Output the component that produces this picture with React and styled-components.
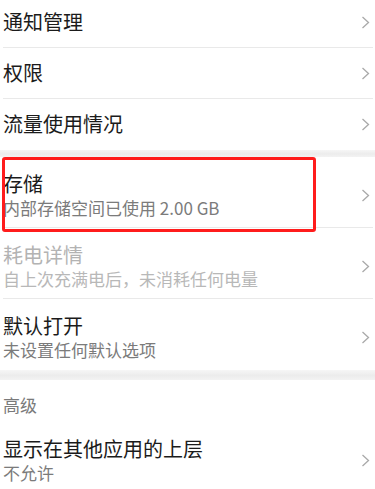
import React from "react";
import styled, { createGlobalStyle } from "styled-components";

const GlobalStyle = createGlobalStyle`
  html, body {
    margin: 0;
    padding: 0;
    background: #ffffff;
  }
  body {
    font-family: "Noto Sans CJK SC", "Noto Sans", sans-serif;
    overflow: hidden;
  }
`;

const items = [
  { title: "通知管理" },
  { title: "权限" },
  { title: "流量使用情况", last: true },
];

const details = [
  { title: "存储", sub: "内部存储空间已使用 2.00 GB", marked: true },
  { title: "耗电详情", sub: "自上次充满电后，未消耗任何电量", disabled: true },
  { title: "默认打开", sub: "未设置任何默认选项", last: true },
];

function Chevron() {
  return (
    <svg width="9" height="13" viewBox="0 0 9 13">
      <polyline
        points="1.5,1 7.5,6.5 1.5,12"
        fill="none"
        stroke="#a9a9a9"
        strokeWidth="1.3"
      />
    </svg>
  );
}

export default function App() {
  return (
    <>
      <GlobalStyle />
      <Page>
        <Section top>
          {items.map((item) => (
            <Row key={item.title} last={item.last}>
              <Texts>
                <Title>{item.title}</Title>
              </Texts>
              <Arrow>
                <Chevron />
              </Arrow>
            </Row>
          ))}
        </Section>
        <Band />
        <Section>
          {details.map((item) => (
            <TallRow key={item.title} last={item.last}>
              <Texts>
                <Title disabled={item.disabled}>{item.title}</Title>
                <Sub disabled={item.disabled}>{item.sub}</Sub>
              </Texts>
              <Arrow>
                <Chevron />
              </Arrow>
              {item.marked && <Mark />}
            </TallRow>
          ))}
        </Section>
        <Band tall />
        <Header>高级</Header>
        <Section>
          <TallRow last tight>
            <Texts>
              <Title>显示在其他应用的上层</Title>
              <Sub>不允许</Sub>
            </Texts>
            <Arrow>
              <Chevron />
            </Arrow>
          </TallRow>
        </Section>
      </Page>
    </>
  );
}

const Page = styled.div`
  width: 375px;
  height: 489px;
  overflow: hidden;
  background: #ffffff;
`;

const Section = styled.div`
  display: flex;
  flex-direction: column;
  margin-top: ${(props) => (props.top ? "-3px" : "0")};
`;

const Row = styled.div`
  position: relative;
  display: flex;
  align-items: center;
  height: 50px;
  margin: 0 2px 0 3px;
  border-bottom: 1px solid ${(props) => (props.last ? "transparent" : "#e9e9e9")};
`;

const TallRow = styled(Row)`
  height: auto;
  padding: ${(props) => (props.tight ? "12px 0 10px" : "14px 0 8px")};
`;

const Texts = styled.div`
  flex: 1;
  display: flex;
  flex-direction: column;
`;

const Title = styled.div`
  font-size: 20px;
  line-height: 26px;
  color: ${(props) => (props.disabled ? "#b3b3b3" : "#1b1b1b")};
`;

const Sub = styled.div`
  font-size: 17px;
  line-height: 22px;
  color: ${(props) => (props.disabled ? "#b8b8b8" : "#7b7b7b")};
`;

const Arrow = styled.div`
  display: flex;
  align-items: center;
  padding-right: 3px;
`;

const Band = styled.div`
  height: ${(props) => (props.tall ? "10px" : "7px")};
  background: linear-gradient(#f6f6f6, #ececec 55%, #f3f3f3);
`;

const Header = styled.div`
  padding: 14px 3px 8px;
  font-size: 17px;
  line-height: 22px;
  color: #7a7a7a;
`;

const Mark = styled.div`
  position: absolute;
  top: 0;
  left: -1px;
  width: 314px;
  height: 75px;
  box-sizing: border-box;
  border: 3px solid #ff1c1c;
  border-radius: 3px;
  pointer-events: none;
`;
